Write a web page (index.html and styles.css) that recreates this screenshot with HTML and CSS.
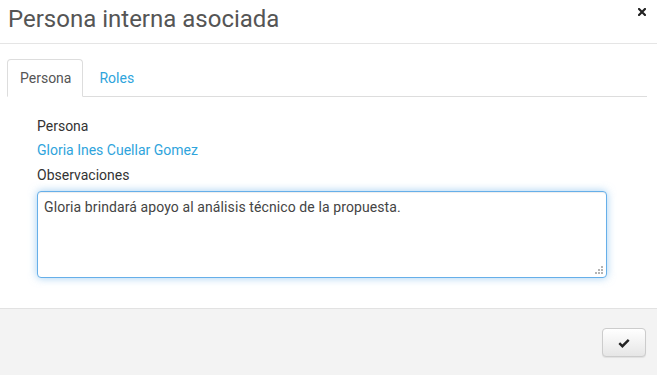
FILE: index.html
```html
<!DOCTYPE html>
<html>

<head>
    <meta charset="UTF-8">
    <title>Persona interna asociada</title>
    <link rel="stylesheet" href="styles.css">
</head>

<body>
    <div class="modal">
        <div class="modal-header">
            <h4 class="modal-title">Persona interna asociada</h4>
            <button class="close" type="button" title="Cerrar">
                <svg width="8" height="8" viewBox="0 0 8 8">
                    <path d="M1 1L7 7M7 1L1 7" stroke="#222" stroke-width="2.2" stroke-linecap="square" />
                </svg>
            </button>
        </div>

        <div class="modal-body">
            <ul class="nav-tabs">
                <li class="active"><a href="#persona">Persona</a></li>
                <li><a href="#roles">Roles</a></li>
            </ul>

            <div class="tab-content">
                <label>Persona</label>
                <a class="person-link" href="#">Gloria Ines Cuellar Gomez</a>
                <label for="observaciones">Observaciones</label>
                <div class="textarea-wrap">
                    <textarea id="observaciones" class="form-control">Gloria brindará apoyo al análisis técnico de la propuesta.</textarea>
                    <svg class="grip" width="8" height="8" viewBox="0 0 8 8">
                        <rect x="6" y="0" width="2" height="2" />
                        <rect x="3" y="3" width="2" height="2" />
                        <rect x="6" y="3" width="2" height="2" />
                        <rect x="0" y="6" width="2" height="2" />
                        <rect x="3" y="6" width="2" height="2" />
                        <rect x="6" y="6" width="2" height="2" />
                    </svg>
                </div>
            </div>
        </div>

        <div class="modal-footer">
            <button class="btn" type="button" title="Guardar">
                <svg width="12" height="10" viewBox="0 0 12 10">
                    <path d="M1.3 5.2L4.4 8.2L10.7 1.8" fill="none" stroke="#222" stroke-width="2.4" />
                </svg>
            </button>
        </div>
    </div>
</body>

</html>
```

FILE: styles.css
```css
body {
    font-family: Roboto, "Liberation Sans", Arial, sans-serif;
    font-size: 14px;
    color: #333;
    margin: 0;
    background: #fff;
}

.modal {
    display: flex;
    flex-direction: column;
    height: 375px;
}

.modal-header {
    display: flex;
    justify-content: space-between;
    align-items: flex-start;
    padding: 5px 11px 0 8px;
    height: 38px;
    border-bottom: 1px solid #e5e5e5;
}

.modal-title {
    margin: 0;
    font-size: 24px;
    font-weight: 400;
    line-height: 28px;
    color: #555;
}

.close {
    border: none;
    background: none;
    padding: 0;
    margin-top: 3px;
    cursor: pointer;
    line-height: 0;
}

.modal-body {
    padding: 15px 10px 0 7px;
    flex: 1;
}

.nav-tabs {
    display: flex;
    list-style: none;
    margin: 0;
    padding: 0;
    border-bottom: 1px solid #ddd;
}

.nav-tabs li {
    margin-bottom: -1px;
}

.nav-tabs a {
    display: block;
    padding: 8px 11px 8px 12px;
    line-height: 20px;
    color: #2fa4dc;
    text-decoration: none;
    border: 1px solid transparent;
    border-radius: 4px 4px 0 0;
}

.nav-tabs .active a {
    color: #555;
    background: #fff;
    border-color: #ddd #ddd transparent;
}

.nav-tabs li + li a {
    padding-left: 15px;
}

.tab-content {
    display: flex;
    flex-direction: column;
    align-items: flex-start;
    padding: 19px 40px 0 30px;
}

label {
    display: block;
    line-height: 20px;
    margin-bottom: 4px;
}

.person-link {
    color: #2fa4dc;
    text-decoration: none;
    line-height: 20px;
    margin-bottom: 5px;
}

.textarea-wrap {
    position: relative;
    width: 100%;
    margin-top: 2px;
    line-height: 0;
}

.form-control {
    box-sizing: border-box;
    width: 100%;
    height: 87px;
    padding: 5px 6px;
    font-family: inherit;
    font-size: 14px;
    letter-spacing: 0.1px;
    line-height: 20px;
    color: #444;
    border: 1px solid #66afe9;
    border-radius: 4px;
    outline: 0;
    resize: none;
    box-shadow: inset 0 1px 1px rgba(0, 0, 0, .075), 0 0 8px rgba(102, 175, 233, .6);
}

.grip {
    position: absolute;
    right: 4px;
    bottom: 4px;
    fill: #b4b4b4;
}

.modal-footer {
    display: flex;
    justify-content: flex-end;
    padding: 19px 11px 0;
    height: 47px;
    background: #f3f3f3;
    border-top: 1px solid #e2e2e2;
}

.btn {
    width: 44px;
    height: 29px;
    border: 1px solid #ccc;
    border-radius: 4px;
    background-image: linear-gradient(to bottom, #fff 0, #e6e6e6 100%);
    box-shadow: inset 0 1px 0 rgba(255, 255, 255, .15), 0 1px 1px rgba(0, 0, 0, .075);
    cursor: pointer;
    display: flex;
    align-items: center;
    justify-content: center;
    padding: 0;
}
```
